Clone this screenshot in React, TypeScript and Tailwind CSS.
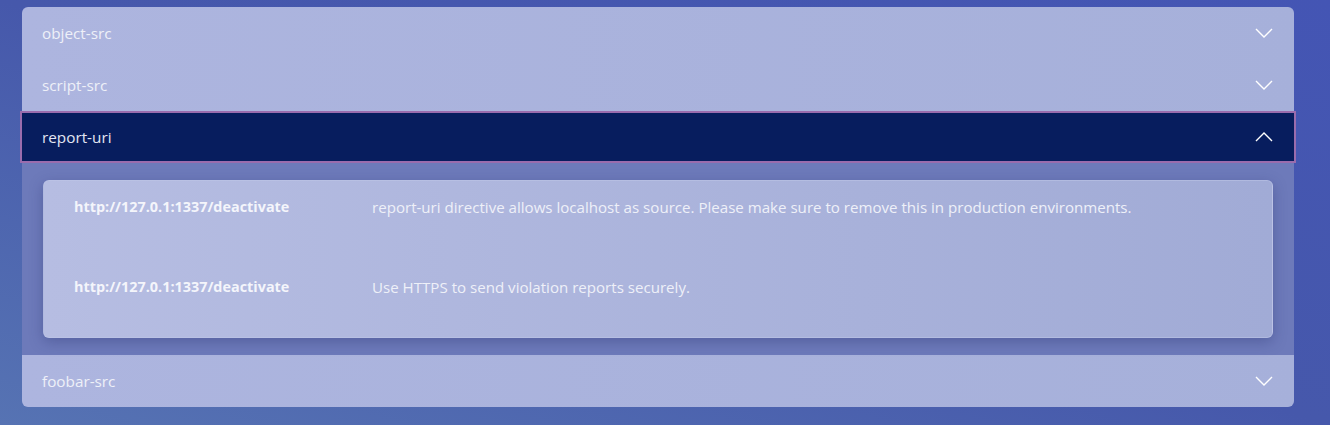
import { useState } from 'react';

type Finding = { url: string; text: string };

const sections: { name: string; findings: Finding[] }[] = [
  { name: 'object-src', findings: [] },
  { name: 'script-src', findings: [] },
  {
    name: 'report-uri',
    findings: [
      {
        url: 'http://127.0.1:1337/deactivate',
        text: 'report-uri directive allows localhost as source. Please make sure to remove this in production environments.',
      },
      { url: 'http://127.0.1:1337/deactivate', text: 'Use HTTPS to send violation reports securely.' },
    ],
  },
  { name: 'foobar-src', findings: [] },
];

function Chevron({ up }: { up: boolean }) {
  return (
    <svg width="18" height="10" viewBox="0 0 18 10" fill="none" className="shrink-0">
      <path d={up ? 'M1 9L9 1L17 9' : 'M1 1L9 9L17 1'} stroke="white" strokeWidth="1.4" />
    </svg>
  );
}

export default function App() {
  const [open, setOpen] = useState('report-uri');
  return (
    <div
      className="w-[1330px] h-[425px] pt-[7px] pl-[22px] pr-[36px] bg-gradient-to-tr from-[#5673b3] via-[#4658ab] to-[#4455b4]"
      style={{ fontFamily: '"Open Sans", "Noto Sans", sans-serif' }}
    >
      <div className="rounded-md bg-gradient-to-r from-[#adb5df] to-[#a6b0da]">
        {sections.map((s, i) => {
          const isOpen = open === s.name;
          return (
            <div key={s.name}>
              <button
                className={
                  isOpen
                    ? 'flex w-[calc(100%+4px)] -mx-[2px] h-[52px] items-center justify-between pl-[20px] pr-[21px] bg-[#071d5e] border-2 border-[#9a6cad] text-[15.3px] text-[#e4e7f3]'
                    : 'flex w-full h-[52px] items-center justify-between pl-[20px] pr-[21px] text-[15.3px] text-[#eef0f8] ' +
                      (i === 0 ? 'rounded-t-md' : '') +
                      (i === sections.length - 1 ? ' rounded-b-md' : '')
                }
                onClick={() => setOpen(isOpen ? '' : s.name)}
              >
                <span>{s.name}</span>
                <Chevron up={isOpen} />
              </button>
              {isOpen && (
                <div className="bg-[#6d7aba] px-[21px] pt-[17px] pb-[17px]">
                  <div className="rounded-md bg-gradient-to-r from-[#b6bde2] to-[#a1abd6] border border-[#c0c7e8]/50 shadow-[0_4px_14px_rgba(40,50,110,0.35)] pl-[30px] pt-[14px] pb-[38px]">
                    {s.findings.map((f, j) => (
                      <div key={j} className={'flex h-[24px] items-center ' + (j > 0 ? 'mt-[56px]' : '')}>
                        <span className="w-[298px] shrink-0 text-[14.4px] font-bold text-[#f4f5fb]">{f.url}</span>
                        <span className="text-[15.1px] text-[#eef0f8]">{f.text}</span>
                      </div>
                    ))}
                  </div>
                </div>
              )}
            </div>
          );
        })}
      </div>
    </div>
  );
}
